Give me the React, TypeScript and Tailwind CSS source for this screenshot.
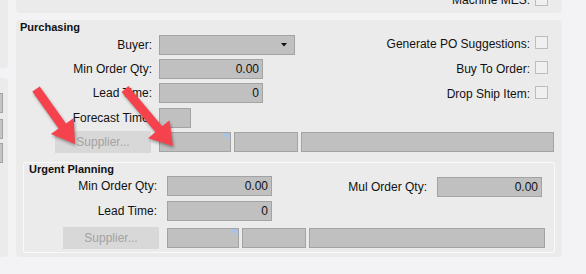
import React from "react";

const Field = ({ w, value, tri }: { w: string; value?: string; tri?: boolean }) => (
  <div
    className={`${w} relative h-[20px] shrink-0 border border-[#a3a3a3] bg-[#c0c0c0] flex items-center justify-end pr-[3px] text-[12px] leading-none text-[#111]`}
  >
    {value}
    {tri && (
      <svg className="absolute right-0 top-0" width="8" height="8" viewBox="0 0 8 8">
        <polygon points="0,0 8,0 8,8" fill="#a9c3e2" />
      </svg>
    )}
  </div>
);

const Check = ({ className = "" }: { className?: string }) => (
  <div className={`w-[13px] h-[13px] shrink-0 border border-[#bdbdbd] bg-[#f0f0f0] ${className}`} />
);

const SupplierBtn = () => (
  <div className="w-[96px] h-[22px] shrink-0 bg-[#d8d8d8] flex items-center justify-center text-[12px] text-[#a2a2a2]">
    Supplier...
  </div>
);

export default function App() {
  return (
    <div className="relative w-[586px] h-[274px] overflow-hidden bg-[#f3f3f5] flex font-['Liberation_Sans',Arial,sans-serif] text-[#111]">
      {/* left strip */}
      <div className="w-[8px] flex flex-col shrink-0">
        <div className="h-[68px] bg-[#ebebeb] rounded-br-[4px]" />
        <div className="mt-[10px] h-[179px] bg-[#ebebeb] rounded-r-[4px] flex flex-col pt-[15px]">
          <div className="w-[3px] h-[20px] border border-l-0 border-[#a3a3a3] bg-[#c4c4c4]" />
          <div className="mt-[6px] w-[3px] h-[20px] border border-l-0 border-[#a3a3a3] bg-[#c4c4c4]" />
          <div className="mt-[4px] w-[3px] h-[20px] border border-l-0 border-[#a3a3a3] bg-[#c4c4c4]" />
        </div>
      </div>

      {/* main column */}
      <div className="ml-[8px] w-[546px] flex flex-col shrink-0">
        <div className="h-[13px] bg-[#ebebeb] rounded-b-[4px] overflow-hidden flex items-end justify-end pr-[14px]">
          <div className="flex items-center mb-[6px]">
            <span className="text-[12px] leading-[13px] pt-[2px]">Machine MES:</span>
            <Check className="ml-[5px]" />
          </div>
        </div>

        <div className="mt-[7px] h-[237px] bg-[#ebebeb] rounded-[4px] flex flex-col">
          <div className="pl-[4px] h-[14px] text-[11px] leading-[14px] font-bold">Purchasing</div>

          <div className="mt-[1px] flex">
            <div className="flex flex-col">
              <div className="flex items-center h-[20px]">
                <div className="w-[136px] text-right text-[12px]">Buyer:</div>
                <div className="ml-[7px] w-[136px] h-[20px] border border-[#a3a3a3] bg-[#c0c0c0] flex items-center justify-end pr-[7px]">
                  <svg width="6" height="4" viewBox="0 0 6 4">
                    <polygon points="0,0 6,0 3,3.5" fill="#111" />
                  </svg>
                </div>
              </div>
              <div className="mt-[4px] flex items-center h-[20px]">
                <div className="w-[136px] text-right text-[12px]">Min Order Qty:</div>
                <div className="ml-[7px]"><Field w="w-[104px]" value="0.00" /></div>
              </div>
              <div className="mt-[4px] flex items-center h-[20px]">
                <div className="w-[136px] text-right text-[12px]">Lead Time:</div>
                <div className="ml-[7px]"><Field w="w-[104px]" value="0" /></div>
              </div>
              <div className="mt-[5px] flex items-center h-[20px]">
                <div className="w-[136px] text-right text-[12px]">Forecast Time:</div>
                <div className="ml-[7px]"><Field w="w-[32px]" /></div>
              </div>
            </div>

            <div className="ml-auto mr-[14px] flex flex-col items-end">
              <div className="flex items-start h-[15px] mt-[1px]">
                <span className="text-[12px] leading-[15px] pt-[1px]">Generate PO Suggestions:</span>
                <Check className="ml-[5px]" />
              </div>
              <div className="mt-[10px] flex items-start h-[15px]">
                <span className="text-[12px] leading-[15px] pt-[1px]">Buy To Order:</span>
                <Check className="ml-[5px]" />
              </div>
              <div className="mt-[10px] flex items-start h-[15px]">
                <span className="text-[12px] leading-[15px] pt-[1px]">Drop Ship Item:</span>
                <Check className="ml-[5px]" />
              </div>
            </div>
          </div>

          <div className="mt-[3px] pl-[39px] flex items-center h-[22px]">
            <SupplierBtn />
            <div className="ml-[8px]"><Field w="w-[72px]" tri /></div>
            <div className="ml-[3px]"><Field w="w-[64px]" /></div>
            <div className="ml-[3px]"><Field w="w-[253px]" /></div>
          </div>

          {/* Urgent Planning */}
          <div className="mt-[9px] ml-[7px] w-[532px] h-[91px] border border-[#f9f9f9] rounded-[2px] flex flex-col">
            <div className="pl-[5px] h-[13px] text-[11px] leading-[13px] font-bold">Urgent Planning</div>
            <div className="flex items-center h-[20px]">
              <div className="w-[133px] text-right text-[12px]">Min Order Qty:</div>
              <div className="ml-[10px]"><Field w="w-[105px]" value="0.00" /></div>
              <div className="ml-auto mr-[12px] flex items-center mt-[1px]">
                <div className="text-[12px]">Mul Order Qty:</div>
                <div className="ml-[10px]"><Field w="w-[105px]" value="0.00" /></div>
              </div>
            </div>
            <div className="mt-[5px] flex items-center h-[20px]">
              <div className="w-[133px] text-right text-[12px]">Lead Time:</div>
              <div className="ml-[10px]"><Field w="w-[105px]" value="0" /></div>
            </div>
            <div className="mt-[6px] pl-[39px] flex items-center h-[22px]">
              <SupplierBtn />
              <div className="ml-[8px]"><Field w="w-[72px]" tri /></div>
              <div className="ml-[3px]"><Field w="w-[64px]" /></div>
              <div className="ml-[3px]"><Field w="w-[236px]" /></div>
            </div>
          </div>
        </div>
      </div>

      {/* red annotation arrows */}
      <svg
        className="absolute left-0 top-0 pointer-events-none drop-shadow-[1px_2px_1.5px_rgba(0,0,0,0.35)]"
        width="586"
        height="274"
        viewBox="0 0 586 274"
      >
        <polygon
          points="32.3,91.6 39.7,86.4 66,123.4 73.7,117.9 75,144 50.9,134.1 58.6,128.6"
          fill="#f4434c"
        />
        <polygon
          points="121.6,91.9 128.4,86.1 162.2,126.3 169.5,120.2 173,146 148.1,138.2 155.4,132.1"
          fill="#f4434c"
        />
      </svg>
    </div>
  );
}
